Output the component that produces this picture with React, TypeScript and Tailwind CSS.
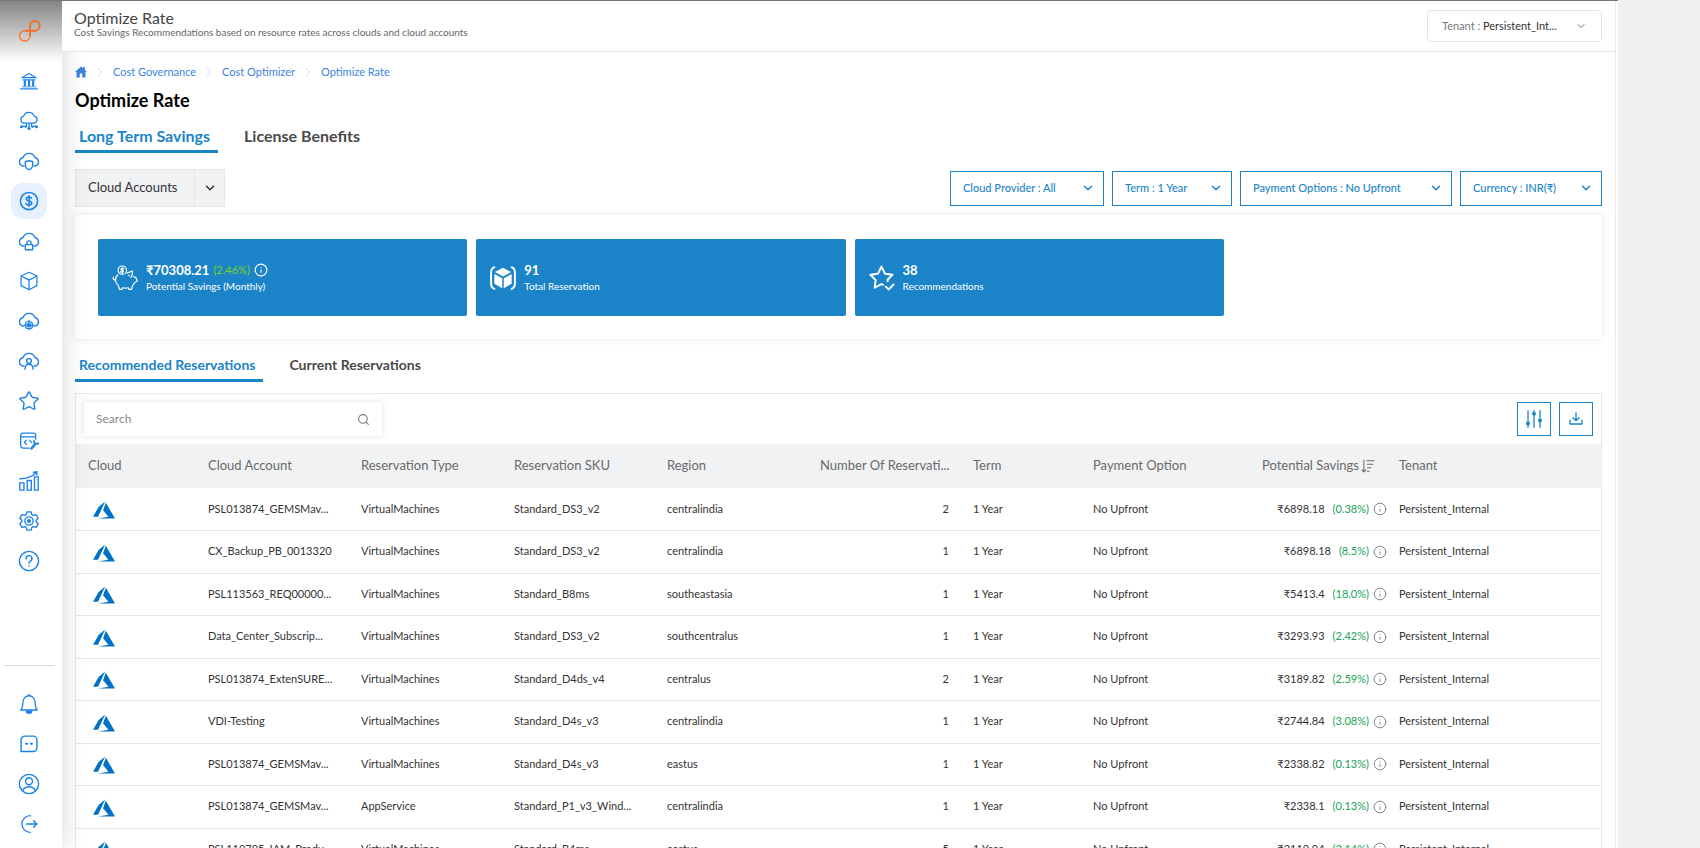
import React from "react";
import { ChevronDown, ChevronRight, Info, Search, Star } from "lucide-react";

type IconProps = { className?: string };

function Svg({ children, className = "size-5", sw = 1.5 }: { children: React.ReactNode; className?: string; sw?: number }) {
  return (
    <svg viewBox="0 0 24 24" fill="none" stroke="currentColor" strokeWidth={sw} strokeLinecap="round" strokeLinejoin="round" className={className} aria-hidden="true">
      {children}
    </svg>
  );
}

const Logo = () => (
  <svg viewBox="0 0 24 24" fill="none" className="size-6" aria-hidden="true">
    <path d="M13 17.500V6.800a4.800 4.800 0 1 1 4.800 4.900H8.200" stroke="#f0712c" strokeWidth="2" />
    <path d="M8.300 11.700a5.200 5.200 0 1 0 4.700 5.800" stroke="#f0813f" strokeWidth="1.600" />
  </svg>
);

const Bank = () => (
  <Svg>
    <path d="M2 21.500h20M3.500 8 12 3l8.500 5zM5 10.500h14" />
    <path d="M7 11v7M12 11v7M17 11v7" strokeWidth="2.600" strokeLinecap="butt" />
    <path d="M4 19h16" strokeWidth="1" />
  </Svg>
);

const CloudNodes = () => (
  <Svg>
    <path d="M6 14.500a4.200 4.200 0 0 1-.4-8.300 6.600 6.600 0 0 1 12.600 0A4.200 4.200 0 0 1 18 14.500z" />
    <path d="M9 15v3.500H4M15 15v3.500h5M12 15v5" />
    <g fill="currentColor" stroke="none">
      <circle cx="3" cy="19" r="1.800" /><circle cx="21" cy="19" r="1.800" /><circle cx="12" cy="21" r="1.900" /><circle cx="8" cy="19" r="1.300" /><circle cx="16" cy="19" r="1.300" />
    </g>
  </Svg>
);

const CloudWith = ({ children }: { children: React.ReactNode }) => (
  <Svg className="size-[22px]">
    <path d="M6.500 17.500H5.800a4.600 4.600 0 0 1-.4-9.100 7 7 0 0 1 13.200 0 4.600 4.600 0 0 1-.4 9.100h-.7" />
    {children}
  </Svg>
);

const Box = () => (
  <Svg>
    <path d="M12 1.500 21.500 6v11.500L12 22.500l-9.500-5V6zM2.500 6 12 11l9.500-5M12 11v11.500" />
  </Svg>
);

const Dollar = () => (
  <Svg sw={1.900}>
    <circle cx="12" cy="12" r="10.300" />
    <path d="M15.200 8.800c-.6-1-1.700-1.500-3.200-1.500-1.900 0-3.200.9-3.200 2.300 0 3.300 6.500 1.500 6.500 4.800 0 1.500-1.400 2.400-3.300 2.400-1.600 0-2.900-.6-3.400-1.700M12 5.600v12.800" />
  </Svg>
);

const CodeTool = () => (
  <Svg>
    <path d="M12.500 20.500H5a3 3 0 0 1-3-3V5a2.500 2.500 0 0 1 2.500-2.500h13A2.500 2.500 0 0 1 20 5v5M2 7h18M9 11l-2.500 2.500L9 16M12.500 11l2.500 2.500" />
    <path d="m15 21 4.500-5.500" strokeWidth="3" />
    <path d="M18 12c0 3 1.500 4 5 3" strokeWidth="2.200" />
  </Svg>
);

const Growth = () => (
  <Svg className="size-[22px]">
    <path d="M2 14h4.500v8H2zM10 11.500h4.500V22H10zM18 7.500h4V22h-4zM2 9.500c8 0 13-1.500 18-6.500M17 2.500l3.500-.5v3.500" strokeLinejoin="miter" />
  </Svg>
);

const Gear = () => (
  <Svg className="size-[22px]">
    <path d="M9.700 2h4.600l.8 3 1.600.9 3-.9 2.300 4-2.200 2.100v1.800L22 15l-2.300 4-3-.9-1.600.9-.8 3H9.700l-.8-3-1.600-.9-3 .9L2 15l2.200-2.100v-1.800L2 9l2.300-4 3 .9 1.600-.9z" />
    <circle cx="12" cy="12" r="4.500" />
    <circle cx="12" cy="12" r="2.300" fill="currentColor" stroke="none" />
  </Svg>
);

const Help = () => (
  <Svg className="size-[22px]" sw={1.600}>
    <circle cx="12" cy="12" r="10.500" />
    <path d="M8.800 9.500a3.200 3.200 0 1 1 4.700 2.700c-1 .6-1.500 1.100-1.500 2.300M12 17.400v.2" />
  </Svg>
);

const Bell = () => (
  <Svg className="size-[22px]">
    <path d="M12 2.500V1.500M3 18.500h18c-1.800-1.500-2-3-2.200-7C18.600 6.500 16 3 12 3s-6.600 3.500-6.800 8.500c-.2 4-.4 5.500-2.200 7z" />
    <path d="M9 19.500h6a3 2.500 0 0 1-6 0z" fill="currentColor" />
  </Svg>
);

const Chat = () => (
  <Svg className="size-5" sw={1.700}>
    <path d="M2.500 21V7A4.500 4.500 0 0 1 7 2.500h10A4.500 4.500 0 0 1 21.500 7v9.500A4.500 4.500 0 0 1 17 21z" />
    <path d="M8.500 11.800h1.200M14.300 11.800h1.200" strokeWidth="2.400" />
  </Svg>
);

const User = () => (
  <Svg className="size-[22px]">
    <circle cx="12" cy="12" r="10.500" />
    <circle cx="12" cy="9" r="3.800" />
    <path d="M5 19.500c1.200-3.200 4-4.500 7-4.500s5.800 1.300 7 4.500" />
  </Svg>
);

const Logout = () => (
  <Svg className="size-5" sw={1.600}>
    <path d="M13.500 22A10 10 0 1 1 13.500 2M9 12h12.500M17.500 8l4 4-4 4" />
  </Svg>
);

const PiggyBank = () => (
  <Svg className="size-[26px]" sw={1.100}>
    <circle cx="9.500" cy="4.800" r="3.900" />
    <path d="M10.900 3.500c-1.500-1-3.200 0-2.400 1 .5.600 1.800.3 2 1.100.2 1-1.700 1.400-2.600.6M9.500 2.300v5" />
    <path d="M5.500 9C3.600 10.500 3.200 12.500 3.200 14c0 2.500 1.500 4 2.700 5l1 3.500h2.300l.6-1.500c1.500.4 3.700.4 5.200 0l.8 1.500H18l1-3.500c.8-.8 1.300-1.500 1.700-2.500l2.600-1.700-1.300-3.300-2-.8M14 7.500l4.700-2V9l-1.200 2.500M3.200 14C1.500 14 .7 12.500 1.200 11.200M15.500 9.500l.6.400" />
  </Svg>
);

const BoxBrackets = () => (
  <Svg className="size-[26px]" sw={1.800}>
    <path d="M4 2C1.500 3 1 4.500 1 7v10c0 2.500.5 4 3 5M20 2c2.500 1 3 2.500 3 5v10c0 2.500-.5 4-3 5" />
    <g fill="currentColor" stroke="none">
      <path d="m12 2.500 7.500 4-7.500 4-7.500-4z" />
      <path d="m4 8.300 7.300 4v9.200L4 17.300zM20 8.300l-7.300 4v9.200l7.300-4.200z" />
    </g>
  </Svg>
);

const StarCheck = () => (
  <Svg className="size-[26px]" sw={1.800}>
    <path d="M13 18.300 11.500 17.700 5.200 21l1-7L1.300 9l7-1L11.500 1.500 14.700 8l7 1-4.500 4.500V15" />
    <path d="m15.500 20 2.700 2.500 4.500-4.500" />
  </Svg>
);

const Sliders = () => (
  <Svg className="size-[18px]" sw={1.700}>
    <path d="M4 1v22M12 1v22M20 1v22" />
    <g fill="currentColor"><circle cx="4" cy="18" r="1.800" /><circle cx="12" cy="5" r="1.800" /><circle cx="20" cy="14" r="1.800" /></g>
  </Svg>
);

const DownloadTray = () => (
  <Svg className="size-4" sw={2}>
    <path d="M12 3v11M7.500 10l4.500 4.500 4.500-4.500M3 14v5.500h18V14" />
  </Svg>
);

const SortDesc = () => (
  <Svg className="size-[14px]" sw={1.800}>
    <path d="M5 2v20M1.500 18.500 5 22l3.500-3.500M10 3h12M11 9h9M11 15h6M11 21h3" />
  </Svg>
);

const Azure = ({ className }: IconProps) => (
  <svg viewBox="0 0 24 24" fill="#0072c6" className={className} role="img" aria-label="Azure">
    <path d="M5.483 21.300H24L14.025 4.013l-3.038 8.347 5.836 6.938L5.483 21.300zM13.230 2.700L6.105 8.677 0 19.253h5.505v.014L13.230 2.700z" />
  </svg>
);

const mainNav = [
  { label: "Governance", icon: <Bank /> },
  { label: "Cloud network", icon: <CloudNodes /> },
  { label: "Cloud protection", icon: <CloudWith><path d="M8 12.500c1.500 0 2.800-.3 4-1 1.200.7 2.500 1 4 1v4c0 2.500-1.700 4-4 5-2.300-1-4-2.500-4-5z" /></CloudWith> },
  { label: "Cost governance", icon: <Dollar />, active: true },
  { label: "Security", icon: <CloudWith><path d="M8 16h8v5.500H8zM9.800 16v-2a2.200 2.200 0 0 1 4.400 0v2" /></CloudWith> },
  { label: "Resources", icon: <Box /> },
  { label: "Operations", icon: <CloudWith><rect x="8.500" y="13" width="7" height="7" rx="1.500" /><circle cx="12" cy="16.500" r="1.700" fill="currentColor" /><path d="M12 11.500V13M12 20v1.500M7 16.500h1.500M15.500 16.500H17" /></CloudWith> },
  { label: "Identity", icon: <CloudWith><circle cx="12" cy="12" r="2.600" /><path d="M7.500 21c.2-3.500 1.800-5.500 4.500-5.500s4.300 2 4.500 5.500" /></CloudWith> },
  { label: "Favourites", icon: <Star className="size-[22px]" strokeWidth={1.500} /> },
  { label: "Developer tools", icon: <CodeTool /> },
  { label: "Reports", icon: <Growth /> },
  { label: "Settings", icon: <Gear /> },
  { label: "Help", icon: <Help /> },
];

const footNav = [
  { label: "Notifications", icon: <Bell /> },
  { label: "Messages", icon: <Chat /> },
  { label: "Profile", icon: <User /> },
  { label: "Sign out", icon: <Logout /> },
];

function NavButton({ label, icon, active }: { label: string; icon: React.ReactNode; active?: boolean }) {
  return (
    <button aria-label={label} className={`flex size-9 items-center justify-center rounded-xl text-[#1a82e8] ${active ? "bg-[#e7f0fe]" : ""}`}>
      {icon}
    </button>
  );
}

function Sidebar() {
  return (
    <aside className="relative z-10 flex w-[62px] shrink-0 flex-col border-t border-[#777579] bg-white shadow-[4px_0_24px_rgba(0,0,0,0.13)]">
      <div className="flex h-[60px] items-center justify-center bg-linear-to-b from-[#858585] to-white pr-1">
        <Logo />
      </div>
      <nav className="flex flex-col items-center gap-1 pt-0.5 pr-1">
        {mainNav.map((n) => <NavButton key={n.label} {...n} />)}
      </nav>
      <div className="mt-auto mr-[7px] ml-1 border-t border-[#d8d8d8]" />
      <nav className="flex flex-col items-center gap-1 pt-5 pr-1 pb-1.5">
        {footNav.map((n) => <NavButton key={n.label} {...n} />)}
      </nav>
    </aside>
  );
}

const crumbs = ["Cost Governance", "Cost Optimizer", "Optimize Rate"];

const filters = [
  { text: "Cloud Provider : All", width: "w-[154px]" },
  { text: "Term : 1 Year", width: "w-[120px]" },
  { text: "Payment Options : No Upfront", width: "w-[212px]" },
  { text: "Currency : INR(₹)", width: "w-[142px]" },
];

function Tabs({ items, size }: { items: string[]; size: string }) {
  return (
    <div role="tablist" className="flex gap-[22px]">
      {items.map((t, i) => (
        <button key={t} role="tab" aria-selected={i === 0} className={`border-b-3 pr-2 pb-1 pl-1 font-bold ${size} ${i === 0 ? "border-[#1b84c8] text-[#1b84c8]" : "border-transparent text-[#4a4a4a]"}`}>
          {t}
        </button>
      ))}
    </div>
  );
}

function StatCard({ icon, label, children }: { icon: React.ReactNode; label: string; children: React.ReactNode }) {
  return (
    <div className="flex h-[77px] items-center gap-2 rounded-xs bg-[#1b84c8] pl-[14px] text-white">
      {icon}
      <div>
        <div className="flex items-center gap-1 text-[13px] leading-4 font-bold">{children}</div>
        <div className="text-[10px] leading-4">{label}</div>
      </div>
    </div>
  );
}

const rows = [
  ["PSL013874_GEMSMav...", "VirtualMachines", "Standard_DS3_v2", "centralindia", "2", "₹6898.18", "(0.38%)"],
  ["CX_Backup_PB_0013320", "VirtualMachines", "Standard_DS3_v2", "centralindia", "1", "₹6898.18", "(8.5%)"],
  ["PSL113563_REQ00000...", "VirtualMachines", "Standard_B8ms", "southeastasia", "1", "₹5413.4", "(18.0%)"],
  ["Data_Center_Subscrip...", "VirtualMachines", "Standard_DS3_v2", "southcentralus", "1", "₹3293.93", "(2.42%)"],
  ["PSL013874_ExtenSURE...", "VirtualMachines", "Standard_D4ds_v4", "centralus", "2", "₹3189.82", "(2.59%)"],
  ["VDI-Testing", "VirtualMachines", "Standard_D4s_v3", "centralindia", "1", "₹2744.84", "(3.08%)"],
  ["PSL013874_GEMSMav...", "VirtualMachines", "Standard_D4s_v3", "eastus", "1", "₹2338.82", "(0.13%)"],
  ["PSL013874_GEMSMav...", "AppService", "Standard_P1_v3_Wind...", "centralindia", "1", "₹2338.1", "(0.13%)"],
  ["PSL119795_IAM_Prody...", "VirtualMachines", "Standard_B4ms", "eastus", "5", "₹2119.94", "(2.14%)"],
];

function ReservationTable() {
  return (
    <table className="w-full table-fixed text-left text-[#333]">
      <colgroup>
        <col className="w-[120px]" />
        <col className="w-[153px]" />
        <col className="w-[153px]" />
        <col className="w-[153px]" />
        <col className="w-[153px]" />
        <col className="w-[153px]" />
        <col className="w-[120px]" />
        <col className="w-[153px]" />
        <col className="w-[153px]" />
        <col />
      </colgroup>
      <thead className="bg-[#f1f2f4] text-[13px] text-[#6a6a6a]">
        <tr className="h-11 whitespace-nowrap *:px-3 *:font-normal">
          <th>Cloud</th>
          <th>Cloud Account</th>
          <th>Reservation Type</th>
          <th>Reservation SKU</th>
          <th>Region</th>
          <th className="text-right">Number Of Reservati...</th>
          <th>Term</th>
          <th>Payment Option</th>
          <th>
            <button className="ml-auto flex items-center gap-0.5">Potential Savings<SortDesc /></button>
          </th>
          <th>Tenant</th>
        </tr>
      </thead>
      <tbody className="text-[11px]">
        {rows.map(([account, type, sku, region, count, savings, pct], i) => (
          <tr key={i} className="h-[42px] border-b border-[#e9e9eb] whitespace-nowrap *:px-3 even:h-[43px]">
            <td><Azure className="mt-0.5 ml-[5px] size-[22px]" /></td>
            <td>{account}</td>
            <td>{type}</td>
            <td>{sku}</td>
            <td>{region}</td>
            <td className="text-right">{count}</td>
            <td>1 Year</td>
            <td>No Upfront</td>
            <td className="pr-0!">
              <div className="flex items-center justify-end">
                {savings}
                <span className="ml-2 text-[#17a356]">{pct}</span>
                <Info className="ml-1 size-[14px] text-[#777]" strokeWidth={1.500} />
              </div>
            </td>
            <td>Persistent_Internal</td>
          </tr>
        ))}
      </tbody>
    </table>
  );
}

export default function App() {
  return (
    <div className="flex h-screen overflow-hidden bg-[#eff0f2] font-['Lato','Noto_Sans',sans-serif] text-[#333]">
      <Sidebar />
      <div className="mr-[82px] flex min-w-0 flex-1 border-t border-[#777579] bg-white pr-0.5">
        <div className="min-w-0 flex-1 border-r border-[#e9e9eb]">
          <header className="relative z-20 flex h-[51px] items-center justify-between border-b border-[#e4e4e6] bg-white pr-[13px] pl-3">
            <div className="pb-1">
              <div className="text-base leading-4 text-[#444]">Optimize Rate</div>
              <p className="text-[10px] leading-3 text-[#666]">Cost Savings Recommendations based on resource rates across clouds and cloud accounts</p>
            </div>
            <button className="flex h-8 w-[175px] items-center justify-between rounded-sm border border-[#e4e4e6] px-[14px] text-[11px]">
              <span><span className="text-[#777]">Tenant : </span>Persistent_Int...</span>
              <ChevronDown className="size-3 text-[#666]" strokeWidth={1.800} />
            </button>
          </header>

          <main className="px-[13px]">
            <nav aria-label="Breadcrumb" className="flex h-10 items-center text-[11px] text-[#3c85df]">
              <a href="#home" aria-label="Home">
                <svg viewBox="0 0 24 24" className="size-3 fill-current" aria-hidden="true"><path d="M12 1 0 12h3v11h6.500v-8h5v8H21V12h3l-4-3.700V2h-3.500v3z" /></svg>
              </a>
              {crumbs.map((c) => (
                <React.Fragment key={c}>
                  <ChevronRight className="mx-1.5 size-[14px] text-[#b9d3f3]" strokeWidth={1.500} />
                  <a href="#crumb">{c}</a>
                </React.Fragment>
              ))}
            </nav>
            <h1 className="text-lg leading-4 font-bold text-black">Optimize Rate</h1>

            <div className="pt-[18px]">
              <Tabs items={["Long Term Savings", "License Benefits"]} size="text-base/5" />
            </div>

            <div className="mt-4 flex items-center justify-between">
              <button className="flex h-[38px] items-center border border-[#e3e5e8] bg-[#f1f2f4] text-[13px]">
                <span className="flex h-full w-[119px] items-center border-r border-[#e3e5e8] pl-3">Cloud Accounts</span>
                <span className="flex w-[29px] justify-center"><ChevronDown className="size-[14px]" strokeWidth={2.500} /></span>
              </button>
              <div className="flex gap-2">
                {filters.map((f) => (
                  <button key={f.text} className={`flex h-[35px] items-center justify-between border border-[#1b84c8] px-2 pl-3 text-[11px] font-medium whitespace-nowrap text-[#1b84c8] ${f.width}`}>
                    {f.text}
                    <ChevronDown className="size-[14px]" strokeWidth={2.500} />
                  </button>
                ))}
              </div>
            </div>

            <section className="mt-2 grid grid-cols-4 gap-x-[9px] bg-white pt-6 pb-[23px] pl-[23px] shadow-[0_0_8px_rgba(0,0,0,0.1)]">
              <StatCard icon={<PiggyBank />} label="Potential Savings (Monthly)">
                ₹70308.21 <span className="text-[11px] font-normal text-[#7ed321]">(2.46%)</span>
                <Info className="size-[14px]" strokeWidth={2} />
              </StatCard>
              <StatCard icon={<BoxBrackets />} label="Total Reservation">91</StatCard>
              <StatCard icon={<StarCheck />} label="Recommendations">38</StatCard>
            </section>

            <div className="pt-4">
              <Tabs items={["Recommended Reservations", "Current Reservations"]} size="text-sm/5" />
            </div>

            <section className="mt-[11px] border border-[#e9e9eb] bg-white">
              <div className="flex h-[50px] items-center justify-between px-2">
                <label className="flex h-[34px] w-[298px] items-center bg-white px-3 shadow-[0_0_6px_rgba(0,0,0,0.13)]">
                  <input type="search" aria-label="Search" placeholder="Search" className="min-w-0 flex-1 text-xs outline-none placeholder:text-[#888]" />
                  <Search className="size-[13px] text-[#777]" />
                </label>
                <div className="flex gap-2 text-[#1b84c8]">
                  <button aria-label="Column settings" className="flex size-[34px] items-center justify-center border border-[#1b84c8]"><Sliders /></button>
                  <button aria-label="Download" className="flex size-[34px] items-center justify-center border border-[#1b84c8]"><DownloadTray /></button>
                </div>
              </div>
              <ReservationTable />
            </section>
          </main>
        </div>
      </div>
    </div>
  );
}
